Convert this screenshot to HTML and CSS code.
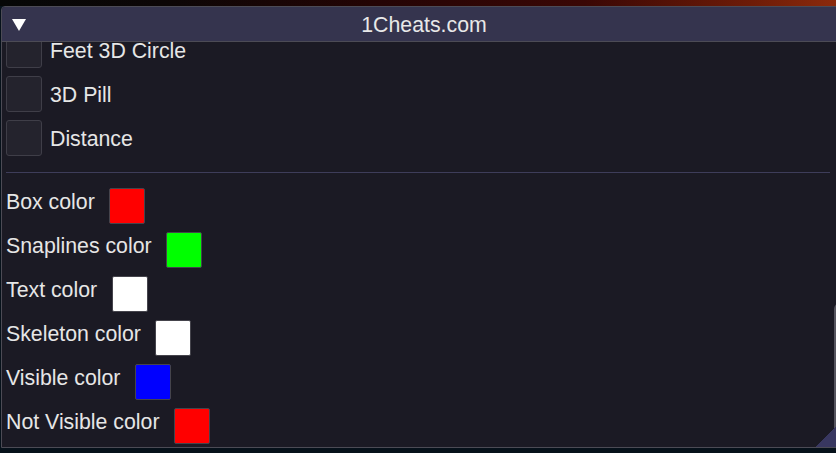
FILE: index.html
```html
<!DOCTYPE html>
<html lang="en">
<head>
    <meta charset="UTF-8">
    <meta name="viewport" content="width=device-width, initial-scale=1.0">
    <title>1Cheats.com</title>
    <link rel="stylesheet" href="styles.css">
</head>
<body>
    <div class="window">
        <!-- Title bar -->
        <div class="titlebar">
            <svg class="collapse" width="16" height="14" viewBox="0 0 16 14">
                <polygon points="1,1 15,1 8,13" fill="#ffffff" />
            </svg>
            <div class="title">1Cheats.com</div>
            <div></div>
        </div>

        <div class="window-body">
            <div class="content">
                <div class="items">
                    <div class="check-row"><span class="box"></span><span class="label">Feet 3D Circle</span></div>
                    <div class="check-row"><span class="box"></span><span class="label">3D Pill</span></div>
                    <div class="check-row"><span class="box"></span><span class="label">Distance</span></div>

                    <div class="separator"></div>

                    <div class="color-row"><span class="label">Box color</span><span class="swatch red"></span></div>
                    <div class="color-row"><span class="label">Snaplines color</span><span class="swatch green"></span></div>
                    <div class="color-row"><span class="label">Text color</span><span class="swatch white"></span></div>
                    <div class="color-row"><span class="label">Skeleton color</span><span class="swatch white"></span></div>
                    <div class="color-row"><span class="label">Visible color</span><span class="swatch blue"></span></div>
                    <div class="color-row"><span class="label">Not Visible color</span><span class="swatch red"></span></div>
                </div>
            </div>

            <!-- Scrollbar -->
            <div class="scrollbar">
                <div class="grab"></div>
            </div>
        </div>

        <div class="resize-grip"></div>
    </div>
</body>
</html>
```

FILE: styles.css
```css
html, body {
    overflow: hidden;
}
body {
    margin: 0;
    padding-top: 6px;
    font-family: "Liberation Sans", Arial, sans-serif;
    color: #e6e6e6;
    background:
        linear-gradient(to right, #060707 0%, #0c0606 20%, #240404 45%, #3a0704 70%, #6e1c08 90%, #8c2a0c 100%) top left / 100% 6px no-repeat,
        #06111a;
}
.window {
    position: relative;
    margin-left: 1px;
    width: 846px;
    height: 442px;
    box-sizing: border-box;
    border: 1px solid #4c4b55;
    border-radius: 4px 4px 0 0;
    background-color: #1b1a24;
    display: flex;
    flex-direction: column;
    overflow: hidden;
}
.titlebar {
    height: 34px;
    flex: none;
    background-color: #35344e;
    border-bottom: 1px solid #4c4b55;
    display: grid;
    grid-template-columns: 40px 1fr 40px;
    align-items: center;
}
.collapse {
    margin-left: 9px;
    margin-top: 1px;
}
.title {
    text-align: center;
    font-size: 21.3px;
    line-height: 24px;
    padding-top: 2px;
    color: #e8e8e8;
}
.window-body {
    flex: 1;
    display: flex;
    overflow: hidden;
}
.content {
    flex: 1;
    padding: 0 4px;
    overflow: hidden;
}
.items {
    margin-top: -10px;
    display: flex;
    flex-direction: column;
    gap: 8px;
}
.label {
    font-size: 21.3px;
    line-height: 24px;
    padding-top: 2px;
    white-space: nowrap;
}
.check-row {
    display: flex;
    align-items: center;
    gap: 8px;
    height: 36px;
}
.box {
    width: 36px;
    height: 36px;
    box-sizing: border-box;
    border: 1px solid #3f3e48;
    border-radius: 3px;
    background-color: #24232d;
}
.separator {
    height: 1px;
    background-color: #3e3d5a;
    margin: 8px 0 7px;
}
.color-row {
    display: flex;
    align-items: flex-start;
    gap: 14.5px;
    height: 36px;
}
.swatch {
    width: 36px;
    height: 36px;
    box-sizing: border-box;
    border: 1px solid #45444c;
    border-radius: 2px;
}
.red { background-color: #ff0000; }
.green { background-color: #00ff00; }
.white { background-color: #ffffff; }
.blue { background-color: #0000ff; }
.scrollbar {
    width: 12px;
    flex: none;
}
.grab {
    margin-top: 261px;
    height: 137px;
    border-radius: 6px;
    background-color: #55545e;
}
.resize-grip {
    position: absolute;
    right: 0;
    bottom: 0;
    width: 30px;
    height: 30px;
    background: linear-gradient(to bottom right, transparent 50%, #383760 50%);
}
```
